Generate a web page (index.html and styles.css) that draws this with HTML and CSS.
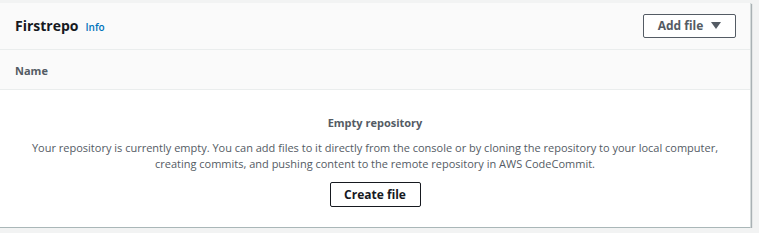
FILE: index.html
```html
<!DOCTYPE html>
<html>
<head>
<meta charset="utf-8">
<link rel="stylesheet" href="styles.css">
</head>
<body>
<div class="card">
  <div class="header">
    <div class="title">
      <h2>Firstrepo</h2>
      <span class="info">Info</span>
    </div>
    <button class="btn add">Add file <span class="caret"></span></button>
  </div>
  <div class="colhead">Name</div>
  <div class="empty">
    <div class="empty-title">Empty repository</div>
    <p>Your repository is currently empty. You can add files to it directly from the console or by cloning the repository to your local computer, creating commits, and pushing content to the remote repository in AWS CodeCommit.</p>
    <button class="btn create">Create file</button>
  </div>
</div>
</body>
</html>
```
FILE: styles.css
```css
html, body {
  margin: 0;
  padding: 0;
}
body {
  background: #f2f3f3;
  font-family: "Open Sans", "Noto Sans", sans-serif;
  color: #16191f;
  padding-top: 3px;
}
.card {
  width: 751px;
  background: #fff;
  border-right: 1px solid #d5dbdb;
  border-bottom: 1px solid #aab7b8;
  box-shadow: 1px 1px 1px rgba(0,28,36,0.3);
  box-sizing: border-box;
}
.header {
  background: #fafafa;
  height: 47px;
  border-bottom: 1px solid #eaeded;
  display: flex;
  align-items: center;
  justify-content: space-between;
  padding: 0 14px 0 15px;
  box-sizing: border-box;
}
.title {
  display: flex;
  align-items: baseline;
  gap: 7px;
  margin-top: -2px;
}
h2 {
  margin: 0;
  font-size: 14px;
  font-weight: 700;
}
.info {
  font-size: 10px;
  color: #0073bb;
  font-weight: 600;
}
.btn {
  font-family: inherit;
  font-weight: 700;
  background: #fff;
  border: 1px solid #545b64;
  border-radius: 2px;
  color: #545b64;
  font-size: 12px;
  padding: 0;
  display: flex;
  align-items: center;
  justify-content: center;
}
.add {
  width: 93px;
  height: 24px;
  gap: 8px;
  margin-top: -1px;
}
.caret {
  width: 0;
  height: 0;
  border-left: 5px solid transparent;
  border-right: 5px solid transparent;
  border-top: 7px solid #545b64;
}
.colhead {
  background: #fafafa;
  height: 40px;
  border-bottom: 1px solid #eaeded;
  display: flex;
  align-items: center;
  padding-left: 15px;
  padding-top: 1px;
  font-size: 11px;
  font-weight: 700;
  color: #545b64;
  box-sizing: border-box;
}
.empty {
  display: flex;
  flex-direction: column;
  align-items: center;
  padding: 25px 20px 20px;
  text-align: center;
  color: #545b64;
}
.empty-title {
  font-size: 11px;
  font-weight: 700;
  line-height: 16px;
}
.empty p {
  margin: 9px 0 0;
  font-size: 11px;
  line-height: 16px;
  max-width: 700px;
}
.create {
  margin-top: 10px;
  width: 91px;
  height: 25px;
  color: #16191f;
  border-color: #16191f;
}
```
